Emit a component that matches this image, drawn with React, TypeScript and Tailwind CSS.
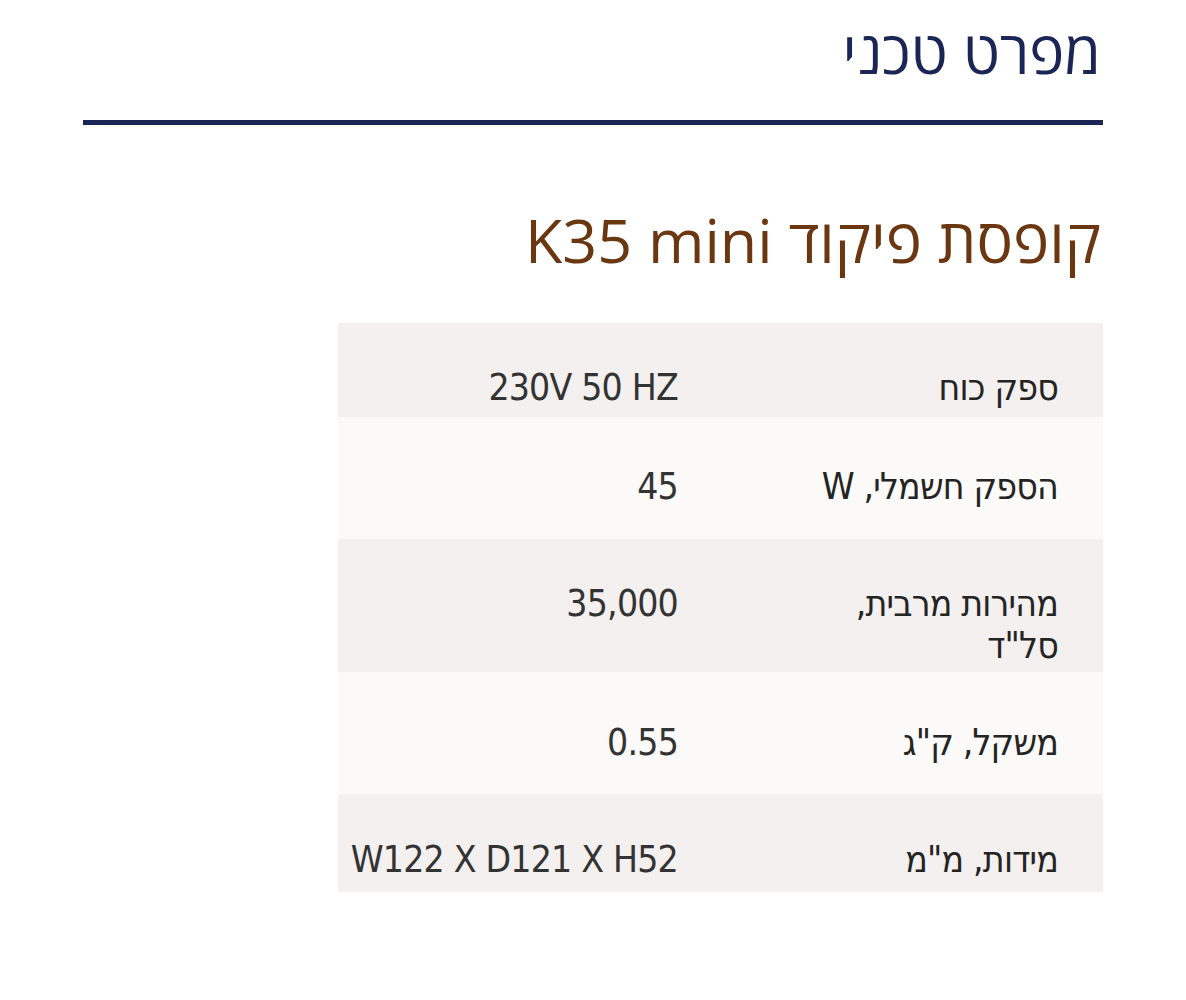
import React from "react";

const rows: { label: string; value: string; bg: string; pt: string; pb: string }[] = [
  { label: "ספק כוח", value: "230V 50 HZ", bg: "bg-[#f4f0ef]", pt: "pt-[44px]", pb: "pb-[8px]" },
  { label: "הספק חשמלי, W", value: "45", bg: "bg-[#fcf9f9]", pt: "pt-[49px]", pb: "pb-[31px]" },
  { label: "מהירות מרבית, סל\"ד", value: "35,000", bg: "bg-[#f4f0ef]", pt: "pt-[44px]", pb: "pb-[5px]" },
  { label: "משקל, ק\"ג", value: "0.55", bg: "bg-[#fcf9f9]", pt: "pt-[50px]", pb: "pb-[30px]" },
  { label: "מידות, מ\"מ", value: "W122 X D121 X H52", bg: "bg-[#f4f0ef]", pt: "pt-[45px]", pb: "pb-[11px]" },
];

export default function App() {
  return (
    <div dir="rtl" className="w-[1186px] h-[1000px] bg-white overflow-hidden">
      <div className="mr-[83px] ml-[83px]">
        <h2 className="pt-[17px] pr-[2px] text-[59px] leading-[68px] text-[#1b2556] font-['Open_Sans','DejaVu_Sans',sans-serif] font-normal">
          מפרט טכני
        </h2>
        <div className="mt-[35px] h-[5px] bg-[#1b2556]" />
        <h3 className="mt-[75px] pr-[2px] text-[61px] leading-[80px] text-[#6b3710] font-['Open_Sans','DejaVu_Sans',sans-serif] font-normal">
          קופסת פיקוד K35 mini
        </h3>
        <div className="mt-[43px] w-[765px] font-['DejaVu_Sans_Condensed','DejaVu_Sans',sans-serif] [font-stretch:condensed] text-[37px] tracking-[-0.8px] leading-[42px]">
          {rows.map((r) => (
            <div key={r.label} className={`flex ${r.bg} ${r.pt} ${r.pb}`}>
              <div className="w-[425px] shrink-0 pr-[45px] pl-[120px] text-[#242424]">{r.label}</div>
              <div className="flex-1 whitespace-nowrap text-[#333]">{r.value}</div>
            </div>
          ))}
        </div>
      </div>
    </div>
  );
}
